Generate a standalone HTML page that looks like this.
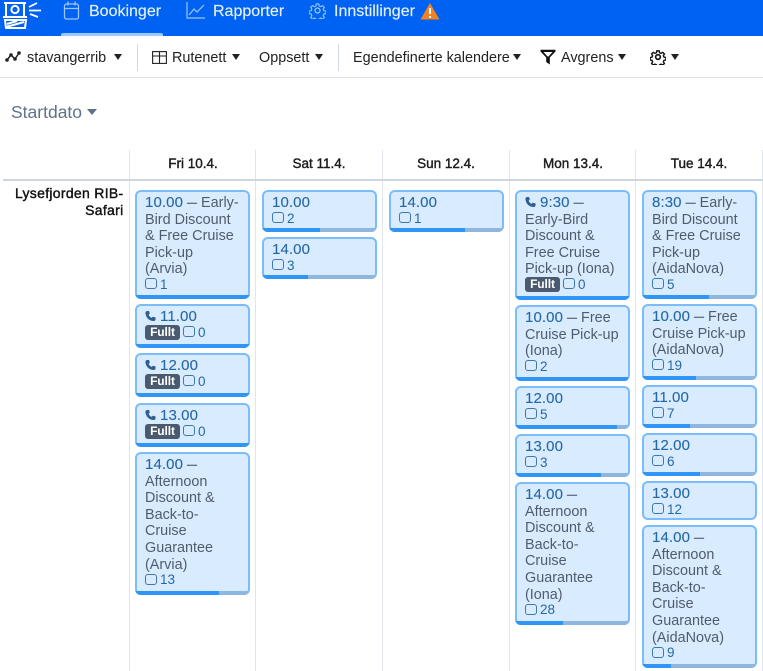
<!DOCTYPE html>
<html><head><meta charset="utf-8">
<style>
*{box-sizing:border-box}
html,body{margin:0;padding:0;width:763px;height:671px;overflow:hidden;background:#fff;font-family:"Liberation Sans",sans-serif}
.a{position:absolute;white-space:nowrap}
.nav{color:#e4f0ff;font-size:16px;line-height:22px;top:1px;-webkit-text-stroke:.15px #e4f0ff}
.tb{color:#222;font-size:14.4px;line-height:20px;top:47.500px}
.car{position:absolute;width:0;height:0;border-left:4.5px solid transparent;border-right:4.5px solid transparent;border-top:6px solid #222}
.vl{position:absolute;top:150px;bottom:0;width:1px;background:#e1e6ec}
.hd{position:absolute;top:155px;width:126px;text-align:center;font-size:13.500px;line-height:18px;color:#1c1c1c;-webkit-text-stroke:.4px #1c1c1c}
.c{position:absolute;width:115px;background:#d9ecff;box-shadow:inset 0 0 0 2px #7bbcfb;border-radius:6px;padding:5px 0 0 10px;font-size:14.4px;line-height:16.6px;color:#505c6c;overflow:hidden;white-space:nowrap}
.c b{font-weight:normal;color:#2568a8;font-size:15px;line-height:1;letter-spacing:.1px;-webkit-text-stroke:.12px #2568a8}
.c u{text-decoration:none;font-size:10px;line-height:1;position:relative;top:-1px;-webkit-text-stroke:.3px #505c6c}
.bar{position:absolute;left:0;right:0;bottom:0;height:4px;background:#8fb6de}
.bar i{display:block;height:100%;background:#2f96f8}
.n{display:block;height:15px;line-height:15px;font-size:13.500px;color:#2568a8;position:relative;top:-1px}
.n s{display:inline-block;width:12px;height:11px;border:1.4px solid #3f78b0;border-radius:3px;margin-right:3px;vertical-align:-.5px;text-decoration:none}
.f{display:inline-block;width:35px;height:15px;line-height:15px;background:#4a5b70;border-radius:3px;color:#fff;font-size:12px;text-align:center;margin-right:3px;vertical-align:top;font-weight:bold;letter-spacing:-.1px}
.p{display:inline-block;width:11px;height:12px;margin-right:4px;vertical-align:-1px}
</style></head><body>

<div class="a" style="left:0;top:0;width:763px;height:35.500px;background:#0062f3"></div>
<div class="a" style="left:61px;top:33px;width:102px;height:3px;background:#9cc8ff;border-radius:2px 2px 0 0"></div>

<svg class="a" style="left:0;top:0" width="46" height="32" viewBox="0 0 46 32" fill="none" stroke="#fff" stroke-width="2">
<path d="M4 3H26M6 3V17M24 3V17M3 17H27"/><circle cx="15" cy="9.500" r="3.600"/>
<path d="M5 20H26L25 28H6ZM6 27L24 22M7 24L17 21"/>
<path d="M29 7L37 3M29 10.500H41M30 14L38 17" stroke-width="1.800"/>
</svg>

<svg class="a" style="left:63px;top:1px" width="18" height="19" viewBox="0 0 18 19" fill="none" stroke="#9cc6fb" stroke-width="1.300"><rect x="1.500" y="3" width="14" height="15" rx="2"/><path d="M1.500 7.500h14M5 .5v4M12 .5v4"/></svg>
<div class="a nav" style="left:89px">Bookinger</div>

<svg class="a" style="left:186px;top:1px" width="20" height="18" viewBox="0 0 20 18" fill="none" stroke="#9cc6fb" stroke-width="1.200"><path d="M1 1V17H19M3 14L8 8L11 11L18 4"/></svg>
<div class="a nav" style="left:213px">Rapporter</div>

<svg class="a" style="left:309px;top:2px" width="17" height="17" viewBox="0 0 24 24" fill="none" stroke="#9cc6fb" stroke-width="1.800"><circle cx="12" cy="12" r="3.500"/><path d="M10 1.500h4l.7 3.200 2.600 1.100 2.800-1.800 2.900 2.900-1.800 2.800 1.100 2.600 3.200.7v4l-3.200.7-1.100 2.600 1.800 2.800-2.900 2.900-2.800-1.800-2.600 1.100-.7 3.200h-4l-.7-3.200-2.600-1.100-2.800 1.800-2.900-2.900 1.800-2.800-1.100-2.600-3.200-.7v-4l3.200-.7 1.100-2.600-1.800-2.800 2.900-2.900 2.800 1.800 2.600-1.100z" transform="translate(1.500 1.500) scale(.875)"/></svg>
<div class="a nav" style="left:334px">Innstillinger</div>

<svg class="a" style="left:420px;top:2px" width="20" height="18" viewBox="0 0 20 18"><path d="M10 1L19.500 17.500H.5Z" fill="#f58220"/><path d="M10 6v6M10 14v2" stroke="#fff" stroke-width="2"/></svg>

<div class="a" style="left:0;top:36px;width:763px;height:42px;background:#fff;border-bottom:1px solid #dde2e8"></div>
<div class="a" style="left:137px;top:44px;width:1px;height:27px;background:#d3d9e0"></div>
<div class="a" style="left:338px;top:44px;width:1px;height:27px;background:#d3d9e0"></div>

<svg class="a" style="left:5px;top:51px" width="16" height="12" viewBox="0 0 16 12" fill="none" stroke="#222" stroke-width="1.500"><path d="M2 9L6 4L10 8L14 2"/><g fill="#222" stroke="none"><circle cx="2" cy="9" r="1.800"/><circle cx="6" cy="4" r="1.800"/><circle cx="10" cy="8" r="1.800"/><circle cx="14" cy="2" r="1.800"/></g></svg>
<div class="a tb" style="left:27px">stavangerrib</div>
<div class="car" style="left:114px;top:54px"></div>

<svg class="a" style="left:152px;top:51px" width="15" height="13" viewBox="0 0 15 13" fill="none" stroke="#222" stroke-width="1.100"><rect x=".6" y=".6" width="13.800" height="11.800"/><path d="M.6 5H14.400M7.500 .6V12.400"/></svg>
<div class="a tb" style="left:172px">Rutenett</div>
<div class="car" style="left:232px;top:54px"></div>
<div class="a tb" style="left:259px">Oppsett</div>
<div class="car" style="left:315px;top:54px"></div>
<div class="a tb" style="left:353px">Egendefinerte kalendere</div>
<div class="car" style="left:513px;top:54px"></div>

<svg class="a" style="left:540px;top:49px" width="16" height="16" viewBox="0 0 16 16"><path d="M.5 .8H15.500V2.500L9.800 8.500V15.500L6.200 13V8.500L.5 2.500ZM3.500 3L7.500 7.500H8.500L12.500 3Z" fill="#111" fill-rule="evenodd"/></svg>
<div class="a tb" style="left:561px">Avgrens</div>
<div class="car" style="left:618px;top:54px"></div>

<svg class="a" style="left:650px;top:49px" width="16" height="16" viewBox="0 0 24 24" fill="none" stroke="#111" stroke-width="2.400"><circle cx="12" cy="12" r="3.500"/><path d="M10 1.500h4l.7 3.200 2.600 1.100 2.800-1.800 2.900 2.900-1.800 2.800 1.100 2.600 3.200.7v4l-3.200.7-1.100 2.600 1.800 2.800-2.900 2.900-2.800-1.800-2.600 1.100-.7 3.200h-4l-.7-3.200-2.600-1.100-2.800 1.800-2.900-2.900 1.800-2.800-1.100-2.600-3.200-.7v-4l3.200-.7 1.100-2.600-1.800-2.800 2.900-2.900 2.800 1.800 2.600-1.100z" transform="translate(1.500 1.500) scale(.875)"/></svg>
<div class="car" style="left:671px;top:54px"></div>

<div class="a" style="left:11px;top:101px;font-size:17.500px;line-height:22px;color:#5f7288">Startdato</div>
<div class="car" style="left:87px;top:109px;border-left-width:5px;border-right-width:5px;border-top:6px solid #5f7288"></div>

<div class="vl" style="left:129px"></div>
<div class="vl" style="left:255px"></div>
<div class="vl" style="left:382px"></div>
<div class="vl" style="left:509px"></div>
<div class="vl" style="left:635px"></div>
<div class="vl" style="left:762px"></div>
<div class="a" style="left:3px;top:179px;width:760px;height:2px;background:#ced6df"></div>

<div class="hd" style="left:130px">Fri 10.4.</div>
<div class="hd" style="left:256px">Sat 11.4.</div>
<div class="hd" style="left:383px">Sun 12.4.</div>
<div class="hd" style="left:510px">Mon 13.4.</div>
<div class="hd" style="left:636px">Tue 14.4.</div>

<div class="a" style="left:0;width:123.500px;top:185px;text-align:right;font-size:14px;line-height:16.500px;color:#111;letter-spacing:.3px;-webkit-text-stroke:.4px #111">Lysefjorden RIB-<br>Safari</div>

<!-- Fri -->
<div class="c" style="left:135px;top:190px;height:109px"><b>10.00</b> <u>—</u> Early-<br>Bird Discount<br>&amp; Free Cruise<br>Pick-up<br>(Arvia)<span class="n"><s></s>1</span><div class="bar"><i style="width:100%"></i></div></div>
<div class="c" style="left:135px;top:304px;height:44px"><svg class="p" viewBox="0 0 12 12"><path d="M2.500 .5L4.500 .5L5.200 3.500L3.900 4.700C4.500 6.200 5.800 7.500 7.300 8.100L8.500 6.800L11.500 7.500V9.500C11.500 10.800 10.500 11.500 9.500 11.500C4.500 11.500 .5 7.500 .5 2.500C.5 1.500 1.200 .5 2.500 .5Z" fill="#2f5f8f"/></svg><b>11.00</b><span class="n"><span class="f">Fullt</span><s></s>0</span><div class="bar"><i style="width:100%"></i></div></div>
<div class="c" style="left:135px;top:353px;height:44px"><svg class="p" viewBox="0 0 12 12"><path d="M2.500 .5L4.500 .5L5.200 3.500L3.900 4.700C4.500 6.200 5.800 7.500 7.300 8.100L8.500 6.800L11.500 7.500V9.500C11.500 10.800 10.500 11.500 9.500 11.500C4.500 11.500 .5 7.500 .5 2.500C.5 1.500 1.200 .5 2.500 .5Z" fill="#2f5f8f"/></svg><b>12.00</b><span class="n"><span class="f">Fullt</span><s></s>0</span><div class="bar"><i style="width:100%"></i></div></div>
<div class="c" style="left:135px;top:403px;height:44px"><svg class="p" viewBox="0 0 12 12"><path d="M2.500 .5L4.500 .5L5.200 3.500L3.900 4.700C4.500 6.200 5.800 7.500 7.300 8.100L8.500 6.800L11.500 7.500V9.500C11.500 10.800 10.500 11.500 9.500 11.500C4.500 11.500 .5 7.500 .5 2.500C.5 1.500 1.200 .5 2.500 .5Z" fill="#2f5f8f"/></svg><b>13.00</b><span class="n"><span class="f">Fullt</span><s></s>0</span><div class="bar"><i style="width:100%"></i></div></div>
<div class="c" style="left:135px;top:452px;height:143px"><b>14.00</b> <u>—</u><br>Afternoon<br>Discount &amp;<br>Back-to-<br>Cruise<br>Guarantee<br>(Arvia)<span class="n"><s></s>13</span><div class="bar"><i style="width:73%"></i></div></div>

<!-- Sat -->
<div class="c" style="left:262px;top:190px;height:42px"><b>10.00</b><span class="n"><s></s>2</span><div class="bar"><i style="width:50%"></i></div></div>
<div class="c" style="left:262px;top:237px;height:42px"><b>14.00</b><span class="n"><s></s>3</span><div class="bar"><i style="width:40%"></i></div></div>

<!-- Sun -->
<div class="c" style="left:389px;top:190px;height:42px"><b>14.00</b><span class="n"><s></s>1</span><div class="bar"><i style="width:66%"></i></div></div>

<!-- Mon -->
<div class="c" style="left:515px;top:190px;height:110px"><svg class="p" viewBox="0 0 12 12"><path d="M2.500 .5L4.500 .5L5.200 3.500L3.900 4.700C4.500 6.200 5.800 7.500 7.300 8.100L8.500 6.800L11.500 7.500V9.500C11.500 10.800 10.500 11.500 9.500 11.500C4.500 11.500 .5 7.500 .5 2.500C.5 1.500 1.200 .5 2.500 .5Z" fill="#2f5f8f"/></svg><b>9:30</b> <u>—</u><br>Early-Bird<br>Discount &amp;<br>Free Cruise<br>Pick-up (Iona)<span class="n"><span class="f">Fullt</span><s></s>0</span><div class="bar"><i style="width:100%"></i></div></div>
<div class="c" style="left:515px;top:305px;height:76px"><b>10.00</b> <u>—</u> Free<br>Cruise Pick-up<br>(Iona)<span class="n"><s></s>2</span><div class="bar"><i style="width:98%"></i></div></div>
<div class="c" style="left:515px;top:386px;height:43px"><b>12.00</b><span class="n"><s></s>5</span><div class="bar"><i style="width:89%"></i></div></div>
<div class="c" style="left:515px;top:434px;height:43px"><b>13.00</b><span class="n"><s></s>3</span><div class="bar"><i style="width:75%"></i></div></div>
<div class="c" style="left:515px;top:482px;height:143px"><b>14.00</b> <u>—</u><br>Afternoon<br>Discount &amp;<br>Back-to-<br>Cruise<br>Guarantee<br>(Iona)<span class="n"><s></s>28</span><div class="bar"><i style="width:42%"></i></div></div>

<!-- Tue -->
<div class="c" style="left:642px;top:190px;height:109px"><b>8:30</b> <u>—</u> Early-<br>Bird Discount<br>&amp; Free Cruise<br>Pick-up<br>(AidaNova)<span class="n"><s></s>5</span><div class="bar"><i style="width:58%"></i></div></div>
<div class="c" style="left:642px;top:304px;height:76px"><b>10.00</b> <u>—</u> Free<br>Cruise Pick-up<br>(AidaNova)<span class="n"><s></s>19</span><div class="bar"><i style="width:47%"></i></div></div>
<div class="c" style="left:642px;top:385px;height:43px"><b>11.00</b><span class="n"><s></s>7</span><div class="bar"><i style="width:42%"></i></div></div>
<div class="c" style="left:642px;top:433px;height:43px"><b>12.00</b><span class="n"><s></s>6</span><div class="bar"><i style="width:50%"></i></div></div>
<div class="c" style="left:642px;top:481px;height:39px"><b>13.00</b><span class="n"><s></s>12</span></div>
<div class="c" style="left:642px;top:525px;height:143px"><b>14.00</b> <u>—</u><br>Afternoon<br>Discount &amp;<br>Back-to-<br>Cruise<br>Guarantee<br>(AidaNova)<span class="n"><s></s>9</span><div class="bar"><i style="width:25%"></i></div></div>

</body></html>
